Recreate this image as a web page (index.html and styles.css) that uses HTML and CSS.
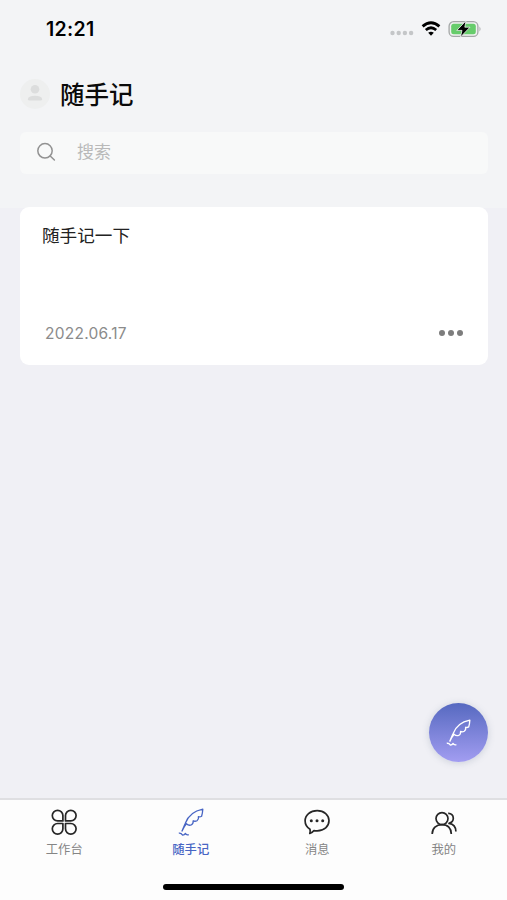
FILE: index.html
```html
<!DOCTYPE html>
<html lang="zh-CN">
<head>
    <meta charset="UTF-8">
    <meta name="viewport" content="width=device-width, initial-scale=1.0">
    <title>随手记</title>
    <link rel="stylesheet" href="styles.css">
</head>
<body>
    <svg width="0" height="0" class="symbols">
        <symbol id="feather" viewBox="0 0 26 28">
            <path d="M3.8 23.5 L7.2 15.5 C9.8 8.5 15.5 3 24.8 1.2 Q24.6 4.8 23.6 8.2 Q22 9.2 20.4 8.6 Q21 11.2 19 12.7 Q17 13.8 15.2 12.8 Q15.4 16 13.2 17 Q10.5 17.8 8.4 15.8 Q6 18.5 3.8 23.5"/>
            <path d="M.8 25.2 Q3.2 24.8 4.4 27 Q6.4 27.2 7.2 25.4 Q8.4 27.4 10.8 26.6"/>
        </symbol>
    </svg>

    <div class="app">
        <header class="header">
            <div class="status-bar">
                <span class="time">12:21</span>
                <div class="status-icons">
                    <svg width="24" height="6" viewBox="0 0 24 6" class="signal">
                        <circle cx="2.5" cy="3" r="2.2"/>
                        <circle cx="8.7" cy="3" r="2.2"/>
                        <circle cx="14.9" cy="3" r="2.2"/>
                        <circle cx="21.1" cy="3" r="2.2"/>
                    </svg>
                    <svg width="20" height="16" viewBox="0 0 20 16" class="wifi">
                        <path d="M1.6 5.4 Q10 -2 18.4 5.4"/>
                        <path d="M4.8 9 Q10 4.6 15.2 9"/>
                        <path class="wifi-dot" d="M7.2 11.7 Q10 9.7 12.8 11.7 L10 14.8 Z"/>
                    </svg>
                    <svg width="34" height="18" viewBox="0 0 34 18" class="battery">
                        <rect x="1.1" y="1.6" width="28.8" height="14.8" rx="4.5" fill="#f0f2f1" stroke="#a4a7a7" stroke-width="1.3"/>
                        <rect x="3.2" y="3.7" width="24.6" height="10.6" rx="2.5" fill="#66cc6b"/>
                        <path d="M31.5 6.5 Q33.5 9 31.5 11.5 Z" fill="#a4a7a7"/>
                        <path d="M18 .8 L8.8 10.4 H14 L12.4 17.2 L22 7.2 H16.8 Z" fill="#000" stroke="#f0f5f1" stroke-width=".8"/>
                    </svg>
                </div>
            </div>

            <div class="title-row">
                <svg width="30" height="30" viewBox="0 0 30 30" class="avatar">
                    <circle cx="15" cy="15" r="15" fill="#eeefef"/>
                    <circle cx="15" cy="10.2" r="4.3" fill="#dcdddd"/>
                    <path d="M7.8 20.5 Q8 16.8 15 16.8 Q22 16.8 22.2 20.5 Q22 21.6 20.5 21.6 H9.5 Q8 21.6 7.8 20.5 Z" fill="#dcdddd"/>
                </svg>
                <h1>随手记</h1>
            </div>

            <div class="search">
                <svg width="20" height="20" viewBox="0 0 20 20">
                    <circle cx="9" cy="8.8" r="7.2"/>
                    <path d="M14.2 14 L18.4 18"/>
                </svg>
                <span>搜索</span>
            </div>
        </header>

        <main class="content">
            <div class="card">
                <div class="card-title">随手记一下</div>
                <div class="card-footer">
                    <span class="date">2022.06.17</span>
                    <div class="more"><i></i><i></i><i></i></div>
                </div>
            </div>
        </main>

        <div class="fab">
            <svg width="25" height="27"><use href="#feather"/></svg>
        </div>

        <nav class="tab-bar">
            <div class="tabs">
                <div class="tab">
                    <svg width="28" height="28" viewBox="0 0 28 28">
                        <path d="M12.9 12.9 H7.6 A5.3 5.3 0 1 1 12.9 7.6 Z"/>
                        <path d="M15.5 12.9 V7.6 A5.3 5.3 0 1 1 20.8 12.9 Z"/>
                        <path d="M12.9 15.5 V20.8 A5.3 5.3 0 1 1 7.6 15.5 Z"/>
                        <path d="M15.5 15.5 H20.8 A5.3 5.3 0 1 1 15.5 20.8 Z"/>
                    </svg>
                    <span>工作台</span>
                </div>
                <div class="tab active">
                    <svg width="26" height="28"><use href="#feather"/></svg>
                    <span>随手记</span>
                </div>
                <div class="tab">
                    <svg width="28" height="28" viewBox="0 0 28 28">
                        <path d="M7 21.2 C3.8 19.3 2.1 16.2 2.1 12.8 C2.1 7 7.2 2.7 14.2 2.7 C21.2 2.7 26 7 26 12.6 C26 18.4 21.2 22.8 14.2 22.8 C13 22.8 12 22.8 11 22.6 C9.8 24.2 8.5 25 6.8 25.5 C7.3 24 7.3 22.6 7 21.2 Z"/>
                        <g class="dots">
                            <circle cx="8.3" cy="12.8" r="1.5"/>
                            <circle cx="14" cy="12.8" r="1.5"/>
                            <circle cx="19.7" cy="12.8" r="1.5"/>
                        </g>
                    </svg>
                    <span>消息</span>
                </div>
                <div class="tab">
                    <svg width="28" height="28" viewBox="0 0 28 28">
                        <circle cx="12" cy="10.6" r="6"/>
                        <path d="M2.2 26 C2.2 20.2 6.2 16.6 12 16.6 C17.8 16.6 21.3 20.2 21.3 26"/>
                        <path d="M18.2 5.4 C21.2 5.2 23.3 7.4 23.3 10.2 C23.3 12.8 21.8 14.4 19 15.4 C23 16 25.8 19 25.9 23.5"/>
                    </svg>
                    <span>我的</span>
                </div>
            </div>
            <div class="home-indicator"></div>
        </nav>
    </div>
</body>
</html>
```
FILE: styles.css
```css
* {
    box-sizing: border-box;
}

body {
    margin: 0;
    font-family: Inter, "Noto Sans CJK SC", sans-serif;
    background: #f0f0f5;
}

.symbols {
    position: absolute;
}

svg {
    display: block;
    flex-shrink: 0;
}

.app {
    position: relative;
    display: flex;
    flex-direction: column;
    height: 900px;
    overflow: hidden;
}

.header {
    height: 208px;
    padding: 0 19px 0 20px;
    background: #f3f4f6;
}

.status-bar {
    display: flex;
    align-items: center;
    justify-content: space-between;
    height: 57px;
    padding: 0 6px 0 26px;
}

.time {
    font-size: 19.5px;
    font-weight: 600;
    letter-spacing: 0.3px;
}

.status-icons {
    display: flex;
    align-items: center;
    gap: 7px;
}

.signal {
    margin-top: 9px;
    fill: #c4c6c8;
}

.wifi {
    fill: none;
    stroke: #000;
    stroke-width: 2.8;
}

.wifi .wifi-dot {
    fill: #000;
    stroke: none;
}

.title-row {
    display: flex;
    align-items: center;
    gap: 10px;
    height: 74px;
}

h1 {
    margin: 0;
    padding-top: 1px;
    font-size: 24.5px;
    font-weight: 500;
    line-height: 36px;
    color: #0a0a0a;
}

.search {
    display: flex;
    align-items: center;
    gap: 21px;
    height: 42px;
    margin-top: 1px;
    padding: 0 16px 3px;
    border-radius: 6px;
    background: #f8f9f9;
    color: #b9b9b9;
    font-size: 17px;
    line-height: 24px;
}

.search svg {
    fill: none;
    stroke: #929292;
    stroke-width: 1.5;
    stroke-linecap: round;
}

.content {
    flex: 1;
    padding: 0 19px 0 20px;
}

.card {
    display: flex;
    flex-direction: column;
    justify-content: space-between;
    height: 158px;
    margin-top: -1px;
    padding: 16px 25px 20px 22px;
    border-radius: 9px;
    background: #fff;
}

.card-title {
    font-size: 17.6px;
    line-height: 26px;
    color: #222;
}

.card-footer {
    display: flex;
    align-items: center;
    justify-content: space-between;
    height: 24px;
    padding-left: 3px;
}

.date {
    font-size: 15.5px;
    letter-spacing: 0.25px;
    color: #8b8b8b;
}

.more {
    display: flex;
    gap: 3px;
}

.more i {
    width: 6px;
    height: 6px;
    border-radius: 50%;
    background: #7d7d7d;
}

/* floating button over the list */
.fab {
    position: absolute;
    right: 19px;
    bottom: 138px;
    display: flex;
    align-items: center;
    justify-content: center;
    width: 59px;
    height: 59px;
    border-radius: 50%;
    background: linear-gradient(#5669c0, #a29df1);
    box-shadow: 0 1px 7px rgba(90, 110, 140, 0.25);
    fill: none;
    stroke: #fff;
    stroke-width: 1.4;
    stroke-linejoin: round;
}

.tab-bar {
    height: 102px;
    border-top: 2px solid #dfdfe2;
    background: #fdfdfd;
}

.tabs {
    display: grid;
    grid-template-columns: repeat(4, 1fr);
    height: 84px;
    padding: 8px 0 0 1px;
}

.tab {
    display: flex;
    flex-direction: column;
    align-items: center;
    gap: 5px;
    font-size: 12.3px;
    line-height: 18px;
    color: #858585;
}

.tab svg {
    fill: none;
    stroke: #262626;
    stroke-width: 1.7;
    stroke-linejoin: round;
}

.tab .dots {
    fill: #262626;
    stroke: none;
}

.tab.active {
    color: #4865c4;
    font-weight: 500;
}

.tab.active svg {
    stroke: #4865c4;
    stroke-width: 1.3;
}

.home-indicator {
    width: 181px;
    height: 6px;
    margin: 0 auto;
    border-radius: 3px;
    background: #000;
}
```
